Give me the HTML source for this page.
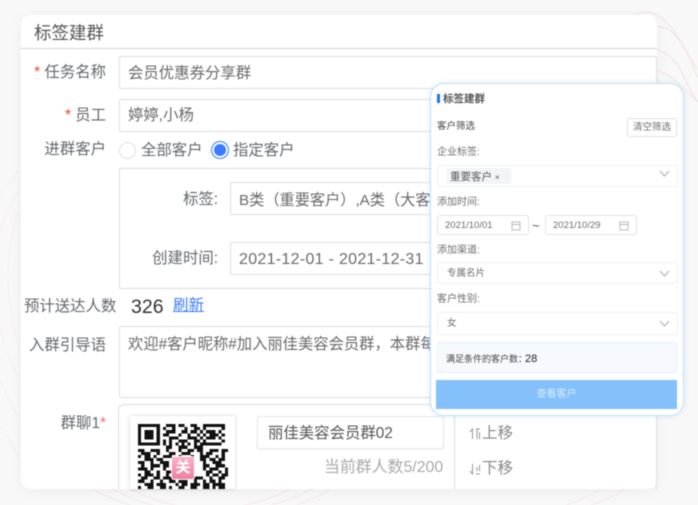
<!DOCTYPE html>
<html lang="zh"><head><meta charset="utf-8"><style>
html,body{margin:0;padding:0;width:698px;height:505px;overflow:hidden;background:#f8f8f8}
*{box-sizing:border-box}
#w{position:absolute;left:0;top:0;width:698px;height:505px;filter:blur(.5px);font-family:"Liberation Sans","Noto Sans CJK SC",sans-serif;color:#606266}
#w div,#w span.a,#w svg{position:absolute}
.t{white-space:nowrap;line-height:20px}
.l{font-size:15.4px;color:#64686d;text-align:right;margin-top:1px}
.i{background:#fff;border:1px solid #dcdfe6;border-radius:2px;font-size:15.4px;line-height:34px;padding-left:8px;white-space:nowrap;overflow:hidden;color:#6a6a6a}
.r{color:#e8452c}
.s{font-size:9.5px;color:#6e6e6e;white-space:nowrap;line-height:12px;margin-top:1px}
.b{background:#fff;border:1px solid #f0f1f3;border-radius:3px;font-size:9.5px;color:#6e6e6e;white-space:nowrap;padding-top:1px}
</style></head><body><div id="w">
<svg style="left:0;top:0" width="698" height="505" fill="none" stroke="#f6dfe3" stroke-width="1">
<path d="M630 17c20-12 35 0 48 20s14 28 20 32"/><path d="M655 27c14-2 22 8 31 24s8 22 12 26"/><path d="M655 50c12 1 20 9 28 25s10 22 15 26"/><path d="M655 70c12 2 22 12 43 32"/>
<g stroke="#f9eef0"><path d="M20 190C-14 230-14 320 20 380"/><path d="M20 210C4 250 4 300 20 350"/><path d="M20 170C-30 220-30 340 20 420"/><path d="M0 425c14 24 22 34 30 64"/></g>
<g stroke="#f8e6ea"><path d="M130 489c50 26 110 26 160 0"/><path d="M112 489c60 32 140 32 200 0"/><path d="M92 489c70 38 180 38 238 0"/><path d="M600 489c-14 8-20 12-34 16"/><path d="M625 489c-14 8-20 12-34 16"/></g>
</svg>
<div style="left:21px;top:15px;width:636px;height:474px;background:#fff;border-radius:10px;box-shadow:0 2px 14px rgba(0,0,0,.05);overflow:hidden"></div>
<div class="t" style="left:34px;top:23px;font-size:17.5px;color:#555">标签建群</div>
<div style="left:21px;top:48px;width:636px;height:1px;background:#d6d6d8"></div>

<div class="t l" style="left:21px;top:62px;width:85px"><span class="r">*</span> 任务名称</div>
<div class="i" style="left:119px;top:56px;width:538px;height:33px">会员优惠券分享群</div>
<div class="t l" style="left:21px;top:105px;width:85px"><span class="r">*</span> 员工</div>
<div class="i" style="left:119px;top:99px;width:538px;height:33px;line-height:32px">婷婷,小杨</div>
<div class="t l" style="left:21px;top:139px;width:85px">进群客户</div>
<div style="left:119px;top:142px;width:17px;height:17px;border:1px solid #dcdfe6;border-radius:50%;background:#fff"></div>
<div class="t l" style="left:141px;top:140px">全部客户</div>
<div style="left:211px;top:141px;width:18px;height:18px;border:1.5px solid #3b7cff;border-radius:50%;background:#fff"></div>
<div style="left:214px;top:144px;width:12px;height:12px;border-radius:50%;background:#3b7cff"></div>
<div class="t l" style="left:233px;top:140px">指定客户</div>

<div style="left:119px;top:168px;width:538px;height:121px;border:1px solid #d8dbe0;border-radius:2px"></div>
<div class="t l" style="left:150px;top:189px;width:68px">标签:</div>
<div class="i" style="left:230px;top:182px;width:400px;height:33px;font-size:15.2px;line-height:35px">B类（重要客户）,A类（大客户）</div>
<div class="t l" style="left:130px;top:248px;width:88px">创建时间:</div>
<div class="i" style="left:230px;top:242px;width:400px;height:33px;font-size:16px;letter-spacing:.3px">2021-12-01 - 2021-12-31</div>

<div class="t l" style="left:24px;top:296px">预计送达人数</div>
<div class="t" style="left:131px;top:297px;font-size:19.5px;color:#333">326</div>
<div class="t" style="left:173px;top:296px;font-size:15.5px;color:#3b7cff;text-decoration:underline">刷新</div>

<div class="t l" style="left:21px;top:335px;width:85px">入群引导语</div>
<div class="i" style="left:119px;top:326px;width:538px;height:72px;font-size:15.3px;line-height:35px">欢迎#客户昵称#加入丽佳美容会员群，本群每日发布优惠信息</div>

<div class="t l" style="left:21px;top:413px;width:85px">群聊1<span class="r" style="color:#f56c6c">*</span></div>
<div style="left:118px;top:404px;width:539px;height:85px;border:1px solid #dcdfe6;border-bottom:0;border-radius:6px 0 0 0"></div>
<div style="left:454px;top:405px;width:1px;height:84px;background:#d8dbe0"></div>
<div style="left:130px;top:416px;width:105px;height:73px;background:#fff;box-shadow:0 0 4px rgba(0,0,0,.18)"></div>
<svg style="left:138px;top:424px" width="90" height="65" viewBox="0 0 29 21" shape-rendering="crispEdges" fill="none" stroke="#111" stroke-width="1">
<path d="M0 .5h7m2 0h3m1 0h2m2 0h2m2 0h7M0 1.5h1m5 0h1m1 0h1m2 0h1m3 0h1m2 0h2m1 0h1m5 0h1M0 2.5h1m1 0h3m1 0h1m2 0h3m2 0h2m1 0h2m1 0h1m1 0h3m1 0h1M0 3.5h1m1 0h3m1 0h1m1 0h2m3 0h1m2 0h1m2 0h1m1 0h1m1 0h3m1 0h1M0 4.5h1m1 0h3m1 0h1m3 0h3m3 0h3m1 0h1m1 0h3m1 0h1M0 5.5h1m5 0h1m1 0h1m1 0h1m2 0h3m2 0h2m1 0h1m5 0h1M0 6.5h7m1 0h1m1 0h1m1 0h1m1 0h1m1 0h1m1 0h1m1 0h7M9 7.5h2m2 0h3m2 0h3M0 8.5h2m2 0h3m2 0h1m3 0h1m2 0h2m1 0h2m2 0h3m1 0h2M1 9.5h3m2 0h1m3 0h2m2 0h3m3 0h1m1 0h2m3 0h1M0 10.5h1m1 0h2m1 0h1m2 0h3m2 0h1m3 0h1m2 0h3m2 0h1m1 0h1M2 11.5h3m1 0h2m3 0h1m2 0h2m4 0h2m1 0h2m1 0h2M0 12.5h2m2 0h1m2 0h3m2 0h1m1 0h1m6 0h1m2 0h3M1 13.5h1m2 0h3m1 0h2m1 0h2m8 0h2m2 0h3m1 0h1M0 14.5h3m1 0h1m3 0h1m2 0h2m8 0h1m1 0h3m2 0h1M2 15.5h2m2 0h1m2 0h3m1 0h1m8 0h2m2 0h1m1 0h2M0 16.5h1m1 0h3m1 0h1m2 0h1m2 0h2m8 0h1m1 0h2m1 0h3M1 17.5h2m2 0h2m1 0h3m2 0h1m1 0h2m1 0h3m2 0h1m2 0h2M0 18.5h2m2 0h1m2 0h1m2 0h2m1 0h3m2 0h1m2 0h1m1 0h2m1 0h1M2 19.5h3m1 0h3m3 0h1m1 0h2m1 0h3m1 0h2m1 0h4M0 20.5h1m2 0h2m2 0h2m1 0h1m2 0h2m2 0h2m2 0h2m1 0h1m1 0h2"/>
</svg>
<div style="left:172px;top:457px;width:22px;height:22px;background:linear-gradient(#fbb0c6,#f07fa2);border-radius:2px;color:#fff;font-size:15px;line-height:22px;text-align:center;font-weight:bold;outline:1px solid #fff">关</div>

<div class="i" style="left:257px;top:416px;width:187px;height:33px;font-size:15.4px;color:#555;padding-left:10px;border-color:#e6e7ea;box-shadow:0 1px 2px rgba(0,0,0,.06)">丽佳美容会员群02</div>
<div class="t" style="left:324px;top:458px;font-size:15.9px;color:#aaa">当前群人数5/200</div>
<svg style="left:469px;top:428px" width="12" height="12" fill="none" stroke="#999" stroke-width="1"><path d="M3.5 11V1L1 4M7 1h4M8 1v10M10.500 4v7"/></svg>
<div class="t" style="left:482px;top:424px;font-size:15.5px;color:#888">上移</div>
<svg style="left:469px;top:463px" width="12" height="12" fill="none" stroke="#999" stroke-width="1"><path d="M3.500 1v10L1 8M7 11h4M8 4v4M10.500 2v6"/></svg>
<div class="t" style="left:482px;top:459px;font-size:15.5px;color:#888">下移</div>

<div style="left:430px;top:83px;width:254px;height:333px;background:#fff;border:1px solid #bfe2fa;border-radius:14px;box-shadow:0 0 6px rgba(150,200,240,.35)"></div>
<div style="left:437px;top:94px;width:3px;height:9px;background:#1678e8"></div>
<div class="s" style="left:443px;top:92px;color:#555;font-size:10.5px;font-weight:bold">标签建群</div>
<div class="s" style="left:437px;top:120px;color:#444">客户筛选</div>
<div class="b" style="left:627px;top:118px;width:50px;height:19px;line-height:15px;text-align:center;border-color:#e2e2e2">清空筛选</div>
<div class="s" style="left:437px;top:146px;font-size:10px">企业标签:</div>
<div class="b" style="left:437px;top:165px;width:241px;height:22px"></div>
<div class="s" style="left:447px;top:168px;width:64px;height:16px;line-height:16px;background:#f3f4f6;padding-left:3px;color:#555;font-size:10.500px;margin-top:0"><span style="position:relative;top:1px">重要客户 <span style="font-size:8px">×</span></span></div>
<svg style="left:659px;top:170px" width="11" height="8" fill="none" stroke="#aaa"><path d="M1 1l4.500 5L10 1"/></svg>
<div class="s" style="left:437px;top:196px;font-size:10px">添加时间:</div>
<div class="b" style="left:437px;top:215px;width:92px;height:20px;line-height:18px;padding-left:7px;border-color:#e4e4e6">2021/10/01</div>
<svg style="left:511px;top:221px" width="11" height="10" fill="none" stroke="#bbb"><rect x="1" y="1" width="8" height="8"/><path d="M1 3.500h8"/></svg>
<div class="s" style="left:532px;top:219px;color:#555;font-size:13px">~</div>
<div class="b" style="left:545px;top:215px;width:92px;height:20px;line-height:18px;padding-left:7px;border-color:#e4e4e6">2021/10/29</div>
<svg style="left:619px;top:221px" width="11" height="10" fill="none" stroke="#bbb"><rect x="1" y="1" width="8" height="8"/><path d="M1 3.500h8"/></svg>
<div class="s" style="left:437px;top:244px;font-size:10px">添加渠道:</div>
<div class="b" style="left:437px;top:262px;width:241px;height:22px;line-height:19px;padding-left:9px">专属名片</div>
<svg style="left:659px;top:270px" width="11" height="8" fill="none" stroke="#aaa"><path d="M1 1l4.500 5L10 1"/></svg>
<div class="s" style="left:437px;top:293px;font-size:10px">客户性别:</div>
<div class="b" style="left:437px;top:312px;width:241px;height:23px;line-height:20px;padding-left:9px">女</div>
<svg style="left:659px;top:320px" width="11" height="8" fill="none" stroke="#aaa"><path d="M1 1l4.500 5L10 1"/></svg>
<div style="left:437px;top:342px;width:240px;height:31px;background:#f6fafe;border:1px solid #e3effa"></div>
<div class="s" style="left:446px;top:351px;color:#444;line-height:14px;font-size:9px">满足条件的客户数：<span style="font-size:11px;color:#222;margin-left:-2px">28</span></div>
<div style="left:436px;top:380px;width:241px;height:29px;background:#84c1fb;color:#d8ecfd;font-size:10px;line-height:30px;text-align:center">查看客户</div>
</div></body></html>
